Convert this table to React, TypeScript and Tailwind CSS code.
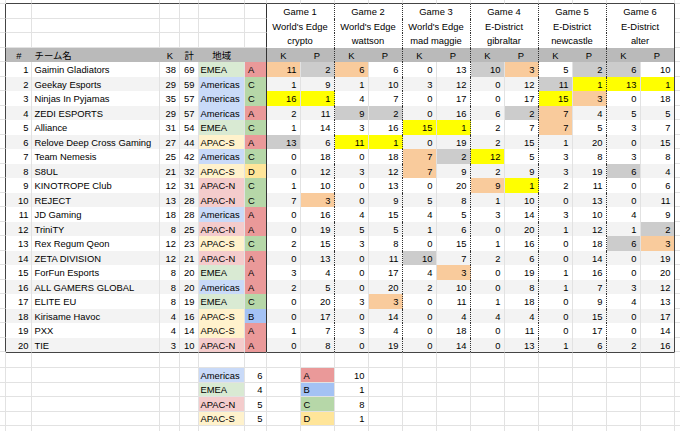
import type { ReactNode } from 'react';

const GAMES = [
  ['Game 1', "World's Edge", 'crypto'],
  ['Game 2', "World's Edge", 'wattson'],
  ['Game 3', "World's Edge", 'mad maggie'],
  ['Game 4', 'E-District', 'gibraltar'],
  ['Game 5', 'E-District', 'newcastle'],
  ['Game 6', 'E-District', 'alter'],
];

// p = peach, g = gray, y = yellow
const ROWS: [number, string, number, number, string, string, string][] = [
  [1, 'Gaimin Gladiators', 38, 69, 'EMEA', 'A', '11p 2g 6p 6 0 13 10g 3p 5 2g 6g 10'],
  [2, 'Geekay Esports', 29, 59, 'Americas', 'C', '1 9 1 10 3 12 0 12 11g 1y 13y 1y'],
  [3, 'Ninjas In Pyjamas', 35, 57, 'Americas', 'C', '16y 1y 4 7 0 17 0 17 15y 3p 0 18'],
  [4, 'ZEDI ESPORTS', 29, 57, 'Americas', 'A', '2 11 9g 2g 0 16 6 2g 7p 4 5 5'],
  [5, 'Alliance', 31, 54, 'EMEA', 'C', '1 14 3 16 15y 1y 2 7 7p 5 3 7'],
  [6, 'Relove Deep Cross Gaming', 27, 44, 'APAC-S', 'A', '13g 6 11y 1y 0 19 2 15 1 20 0 15'],
  [7, 'Team Nemesis', 25, 42, 'Americas', 'C', '0 18 0 18 7p 2g 12y 5 3 8 3 8'],
  [8, 'S8UL', 21, 32, 'APAC-S', 'D', '0 12 3 12 7p 9 2 9 3 19 6g 4'],
  [9, 'KINOTROPE Club', 12, 31, 'APAC-N', 'C', '1 10 0 13 0 20 9p 1y 2 11 0 6'],
  [10, 'REJECT', 13, 28, 'APAC-N', 'C', '7 3p 0 9 5 8 1 10 0 13 0 11'],
  [11, 'JD Gaming', 18, 28, 'Americas', 'A', '0 16 4 15 4 5 3 14 3 10 4 9'],
  [12, 'TriniTY', 8, 25, 'APAC-N', 'A', '0 19 5 5 1 6 0 20 1 12 1 2g'],
  [13, 'Rex Regum Qeon', 12, 23, 'APAC-S', 'C', '2 15 3 8 0 15 1 16 0 18 6g 3p'],
  [14, 'ZETA DIVISION', 12, 21, 'APAC-N', 'A', '0 13 0 11 10g 7 2 6 0 14 0 19'],
  [15, 'ForFun Esports', 8, 20, 'EMEA', 'A', '3 4 0 17 4 3p 0 19 1 16 0 20'],
  [16, 'ALL GAMERS GLOBAL', 8, 20, 'Americas', 'A', '2 5 0 20 2 10 0 8 1 7 3 12'],
  [17, 'ELITE EU', 8, 19, 'EMEA', 'C', '0 20 3 3p 0 11 1 18 0 9 4 13'],
  [18, 'Kirisame Havoc', 4, 16, 'APAC-S', 'B', '0 17 0 14 0 4 4 4 0 15 0 17'],
  [19, 'PXX', 4, 14, 'APAC-S', 'A', '1 7 3 4 0 18 0 11 0 17 0 14'],
  [20, 'TIE', 3, 10, 'APAC-N', 'A', '0 8 0 19 0 14 0 13 1 6 2 16'],
];

const LEGEND: [string, number, string, number][] = [
  ['Americas', 6, 'A', 10],
  ['EMEA', 4, 'B', 1],
  ['APAC-N', 5, 'C', 8],
  ['APAC-S', 5, 'D', 1],
];

const regionBg: Record<string, string> = {
  EMEA: 'bg-[#d9ead3]',
  Americas: 'bg-[#c9daf8]',
  'APAC-N': 'bg-[#f4cccc]',
  'APAC-S': 'bg-[#fff2cc]',
};
const groupBg: Record<string, string> = {
  A: 'bg-[#ea9999]',
  B: 'bg-[#a4c2f4]',
  C: 'bg-[#b6d7a8]',
  D: 'bg-[#ffe599]',
};
const hl: Record<string, string> = {
  p: 'bg-[#f9cb9c]',
  g: 'bg-[#cccccc]',
  y: 'bg-[#ffff00]',
};

const GRID = 'border-r border-b border-[#e2e2e2]';
const EDGE_L = 'border-b border-b-[#e2e2e2] border-r-[1.5px] border-r-[#444]';
const VLINE = 'border-r border-r-[#e2e2e2]';
const THICK = 'border-r-[1.5px] border-r-[#333]';
const DOT = 'border-r border-r-[#333] [border-right-style:dotted]';
const EDGE_R = 'border-r-[1.5px] border-r-[#444]';
const HEAD = 'bg-[#bababa]';

const Cell = ({ className = '', children }: { className?: string; children?: ReactNode }) => (
  <div className={`flex items-center overflow-hidden whitespace-nowrap pt-[1.5px] leading-none ${className}`}>
    {children}
  </div>
);

export default function App() {
  const cells: ReactNode[] = [];
  let k = 0;
  const add = (cls: string, content?: ReactNode) =>
    cells.push(
      <Cell key={k++} className={cls}>
        {content}
      </Cell>,
    );

  // strip above the table
  add(GRID);
  for (let i = 1; i <= 18; i++) add('border-r border-r-[#e2e2e2] border-b-[1.5px] border-b-[#444]');
  add('border-b border-b-[#e2e2e2]');

  // game headers
  for (let line = 0; line < 3; line++) {
    add(EDGE_L);
    for (let i = 1; i <= 5; i++) add(GRID);
    add(`border-b border-b-[#e2e2e2] ${THICK}`);
    GAMES.forEach((g, gi) => add(`col-span-2 justify-center ${gi < 5 ? DOT : EDGE_R}`, g[line]));
    add('border-b border-b-[#e2e2e2]');
  }

  // K / P header row
  add(EDGE_L);
  add(`${HEAD} justify-center`, '#');
  add(`${HEAD} pl-[3px]`, 'チーム名');
  add(`${HEAD} justify-center`, 'K');
  add(`${HEAD} justify-center`, '計');
  add(`${HEAD} justify-center`, '地域');
  add(`${HEAD} ${THICK}`);
  GAMES.forEach((_, gi) => {
    add(`${HEAD} justify-center`, 'K');
    add(`${HEAD} justify-center ${gi < 5 ? DOT : EDGE_R}`, 'P');
  });
  add('border-b border-b-[#e2e2e2]');

  // team rows
  ROWS.forEach(([n, name, kills, total, region, group, games], i) => {
    const bg = i % 2 === 1 ? 'bg-[#f3f3f3]' : 'bg-white';
    add(EDGE_L);
    add(`${bg} ${VLINE} justify-end pr-[2px]`, n);
    add(`${bg} ${VLINE} pl-[3px]`, name);
    add(`${bg} ${VLINE} justify-end pr-[3px]`, kills);
    add(`${bg} ${VLINE} justify-end pr-[3px]`, total);
    add(`${regionBg[region]} ${VLINE} pl-[2px]`, region);
    add(`${groupBg[group]} ${THICK} pl-[3px]`, group);
    games.split(' ').forEach((v, j) => {
      const m = v.match(/^(\d+)([pgy]?)$/)!;
      const fill = m[2] ? hl[m[2]] : bg;
      const border = j % 2 === 0 ? VLINE : j === 11 ? EDGE_R : DOT;
      add(`${fill} ${border} justify-end pr-[3px]`, m[1]);
    });
    add('border-b border-b-[#e2e2e2]');
  });

  // empty row under the table
  add(GRID);
  for (let i = 1; i <= 18; i++) add('border-r border-b border-[#e2e2e2] border-t-[1.5px] border-t-[#444]');
  add('border-b border-b-[#e2e2e2]');

  // legend + filler rows
  for (let r = 0; r < 5; r++) {
    const row = LEGEND[r];
    for (let c = 0; c < 20; c++) {
      if (row && c === 5) add(`${regionBg[row[0]]} ${GRID} pl-[2px]`, row[0]);
      else if (row && c === 6) add(`${GRID} justify-end pr-[3px]`, row[1]);
      else if (row && c === 8) add(`${groupBg[row[2]]} ${GRID} pl-[3px]`, row[2]);
      else if (row && c === 9) add(`${GRID} justify-end pr-[3px]`, row[3]);
      else add(c === 19 ? 'border-b border-b-[#e2e2e2]' : GRID);
    }
  }

  return (
    <div className="h-[431px] w-[680px] overflow-hidden bg-white text-[9.4px] text-black [font-family:'Liberation_Sans','Noto_Sans_CJK_JP',sans-serif]">
      <div className="grid grid-cols-[6px_25.5px_128.5px_20px_18.5px_46.5px_21.5px_repeat(12,34px)_1fr] grid-rows-[4px_repeat(24,14.5px)_16px_repeat(5,14.5px)]">
        {cells}
      </div>
    </div>
  );
}
